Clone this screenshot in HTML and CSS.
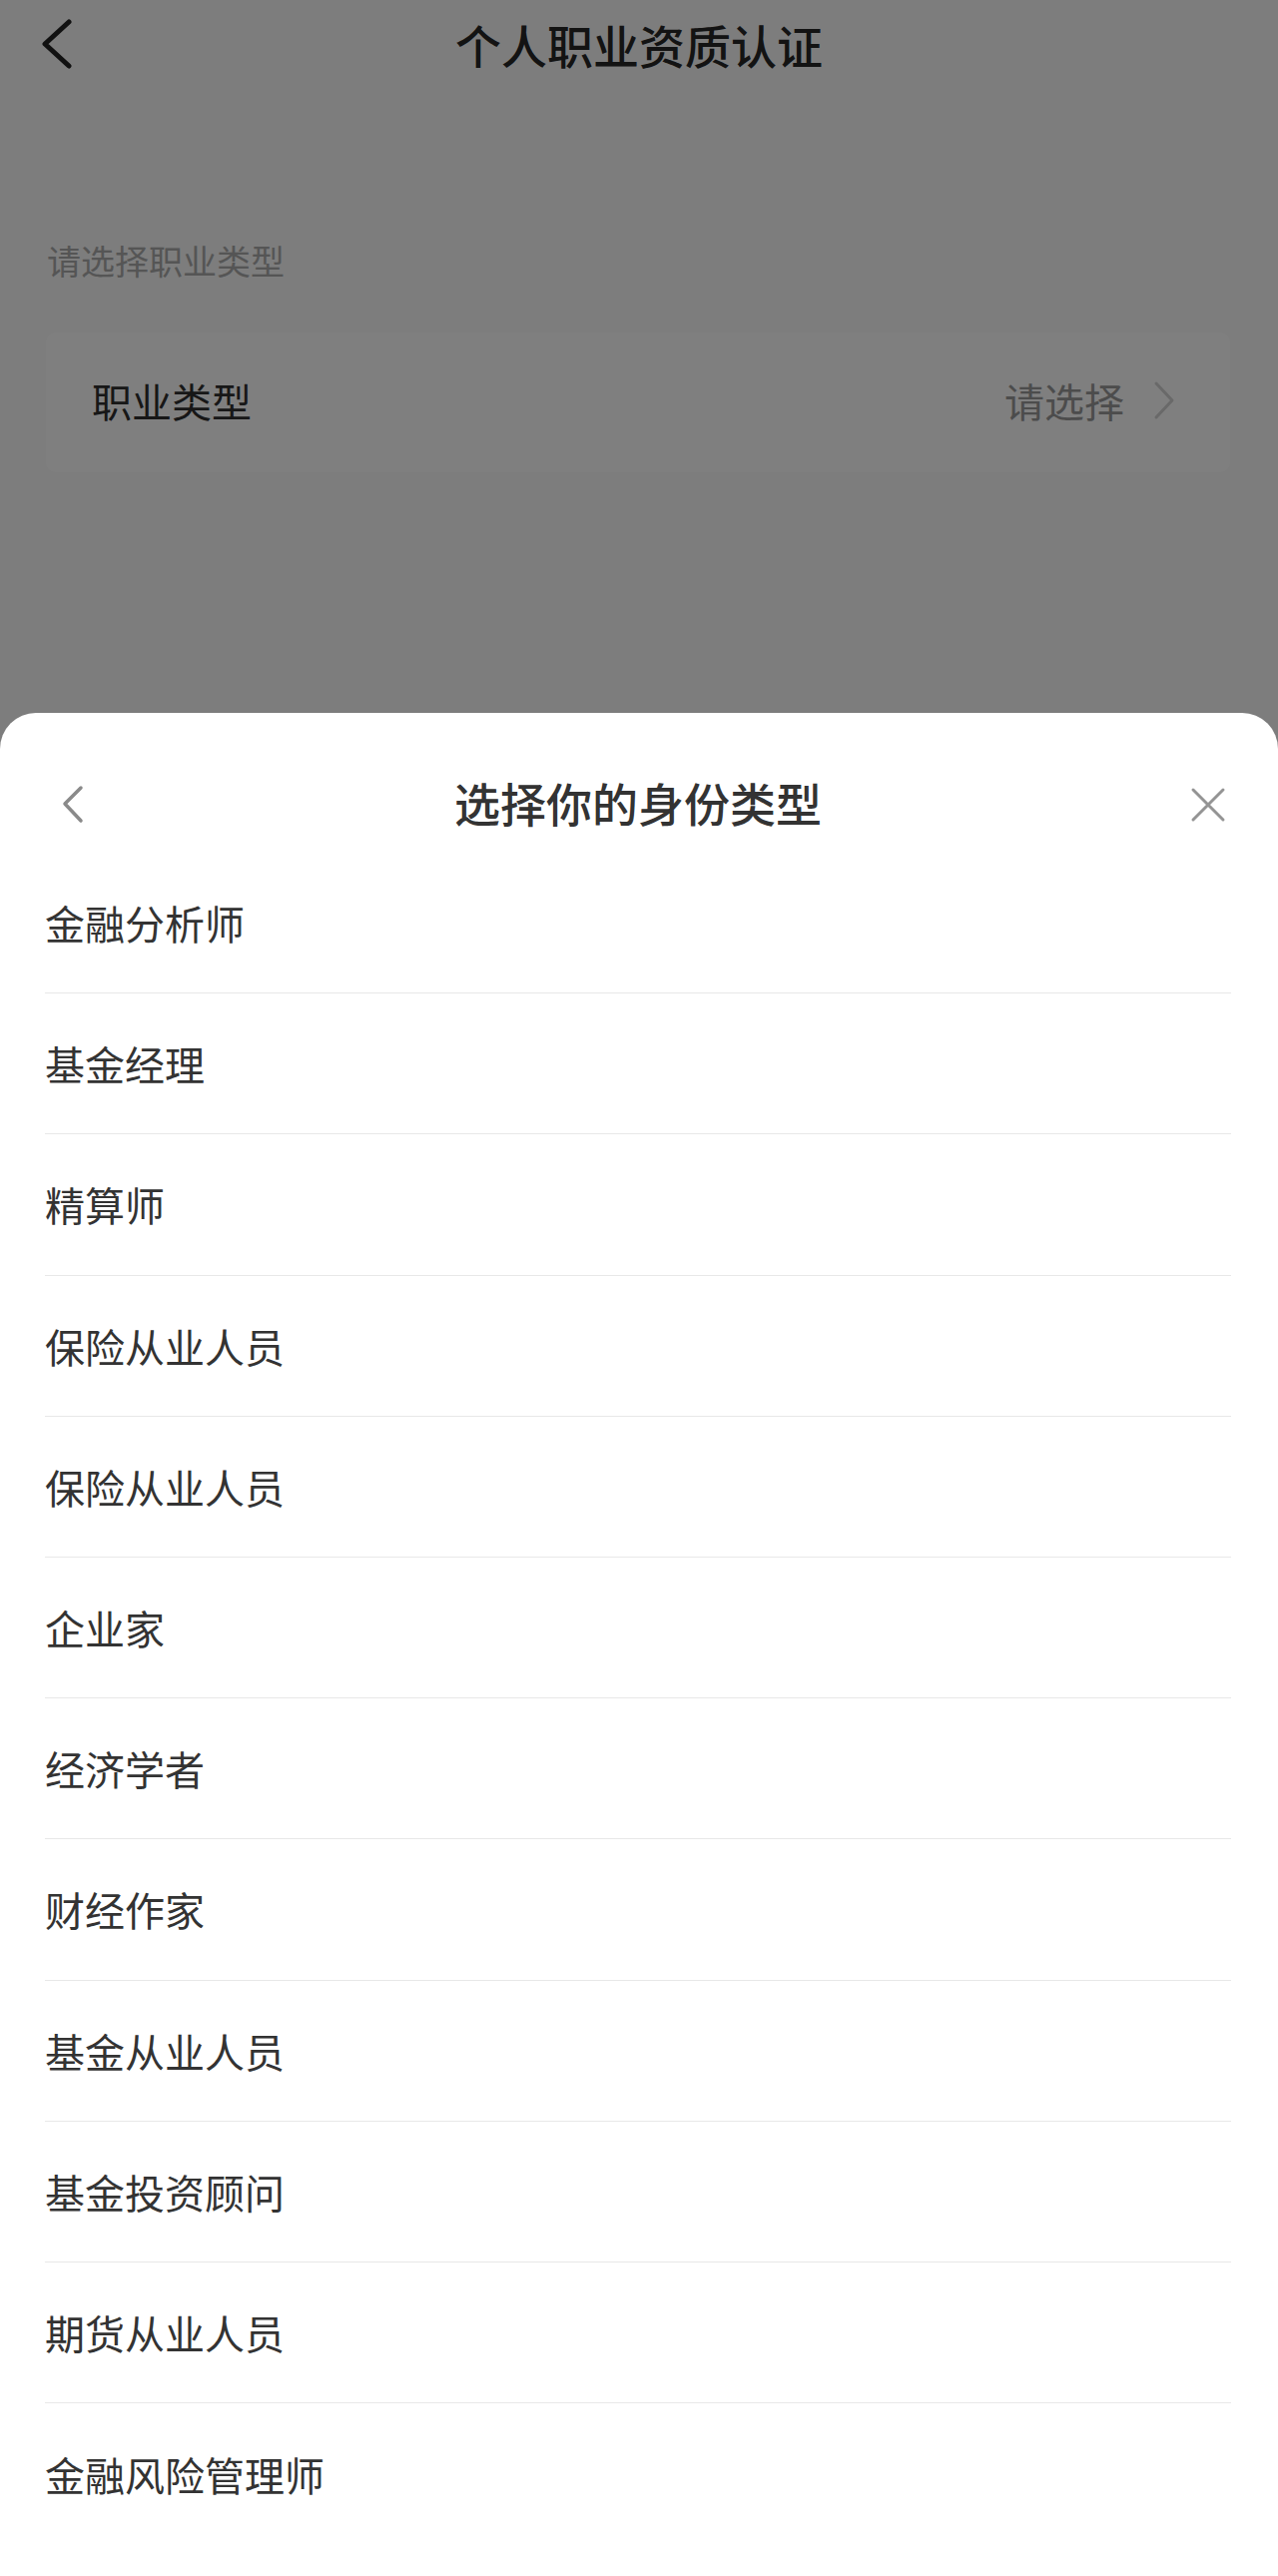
FILE: index.html
```html
<!DOCTYPE html>
<html lang="zh-CN">
<head>
  <meta charset="UTF-8">
  <meta name="viewport" content="width=device-width, initial-scale=1.0">
  <title>个人职业资质认证</title>
  <link rel="stylesheet" href="styles.css">
</head>
<body>
  <div class="page">
    <header class="topbar">
      <button class="back-btn" type="button">
        <svg width="32" height="50" viewBox="0 0 32 50"><polyline points="28,3 4,25 28,47" fill="none" stroke="#222" stroke-width="5" stroke-linecap="round" stroke-linejoin="round"/></svg>
      </button>
      <h1>个人职业资质认证</h1>
      <span></span>
    </header>

    <p class="section-label">请选择职业类型</p>

    <div class="field-card">
      <span class="field-name">职业类型</span>
      <span class="field-value">
        请选择
        <svg width="22" height="40" viewBox="0 0 22 40"><polyline points="3,3 19,20 3,37" fill="none" stroke="#d2d2d2" stroke-width="3" stroke-linecap="round" stroke-linejoin="round"/></svg>
      </span>
    </div>
  </div>

  <div class="mask"></div>

  <div class="sheet">
    <div class="sheet-header">
      <button class="sheet-back" type="button">
        <svg width="22" height="40" viewBox="0 0 22 40"><polyline points="19,3 3,19 19,36" fill="none" stroke="#8a8a8a" stroke-width="3.5" stroke-linecap="round" stroke-linejoin="round"/></svg>
      </button>
      <h2>选择你的身份类型</h2>
      <button class="sheet-close" type="button">
        <svg width="36" height="36" viewBox="0 0 36 36"><path d="M3 3 L33 33 M33 3 L3 33" fill="none" stroke="#949494" stroke-width="3" stroke-linecap="round"/></svg>
      </button>
    </div>
    <ul class="type-list">
      <li>金融分析师</li>
      <li>基金经理</li>
      <li>精算师</li>
      <li>保险从业人员</li>
      <li>保险从业人员</li>
      <li>企业家</li>
      <li>经济学者</li>
      <li>财经作家</li>
      <li>基金从业人员</li>
      <li>基金投资顾问</li>
      <li>期货从业人员</li>
      <li>金融风险管理师</li>
    </ul>
  </div>
</body>
</html>
```

FILE: styles.css
```css
* {
  box-sizing: border-box;
}
body {
  margin: 0;
  padding: 0;
  min-height: 100vh;
  background: #fafafa;
  font-family: "Noto Sans CJK SC", "Noto Sans", sans-serif;
  color: #333;
}
button {
  border: none;
  background: none;
  padding: 0;
  cursor: pointer;
  display: flex;
  align-items: center;
}
.page {
  min-height: 100vh;
}
.topbar {
  height: 88px;
  display: grid;
  grid-template-columns: 1fr auto 1fr;
  align-items: center;
  padding: 0 41px;
}
.topbar h1 {
  margin: 0;
  font-size: 46px;
  font-weight: 500;
  color: #262626;
  line-height: 1;
}
.section-label {
  margin: 156px 0 0 47px;
  font-size: 34px;
  line-height: 34px;
  color: #ababab;
}
.field-card {
  margin: 55px 48px 0 46px;
  height: 140px;
  background: #fff;
  border-radius: 10px;
  display: flex;
  align-items: center;
  justify-content: space-between;
  padding: 0 55px 5px 46px;
}
.field-name {
  font-size: 40px;
  color: #2e2e2e;
}
.field-value {
  display: flex;
  align-items: center;
  gap: 29px;
  font-size: 40px;
  color: #999;
}
.mask {
  position: fixed;
  inset: 0;
  background: rgba(0, 0, 0, 0.5);
}
.sheet {
  position: fixed;
  top: 714px;
  left: 0;
  right: 0;
  bottom: 0;
  background: #fff;
  border-radius: 36px 36px 0 0;
  padding: 0 47px 0 45px;
}
.sheet-header {
  height: 140px;
  padding: 42px 0 4px;
  display: grid;
  grid-template-columns: 1fr auto 1fr;
  align-items: center;
}
.sheet-header h2 {
  margin: 0;
  font-size: 46px;
  font-weight: 500;
  color: #333;
  line-height: 94px;
}
.sheet-back {
  justify-self: start;
  margin: 6px 0 0 17px;
}
.sheet-close {
  justify-self: end;
  margin: 5px 5px 0 0;
}
.type-list {
  list-style: none;
  margin: 0;
  padding: 0;
}
.type-list li {
  height: 141.2px;
  display: flex;
  align-items: center;
  font-size: 40px;
  color: #333;
  border-bottom: 1px solid #e8e8e8;
}
.type-list li:last-child {
  border-bottom: none;
}
```
